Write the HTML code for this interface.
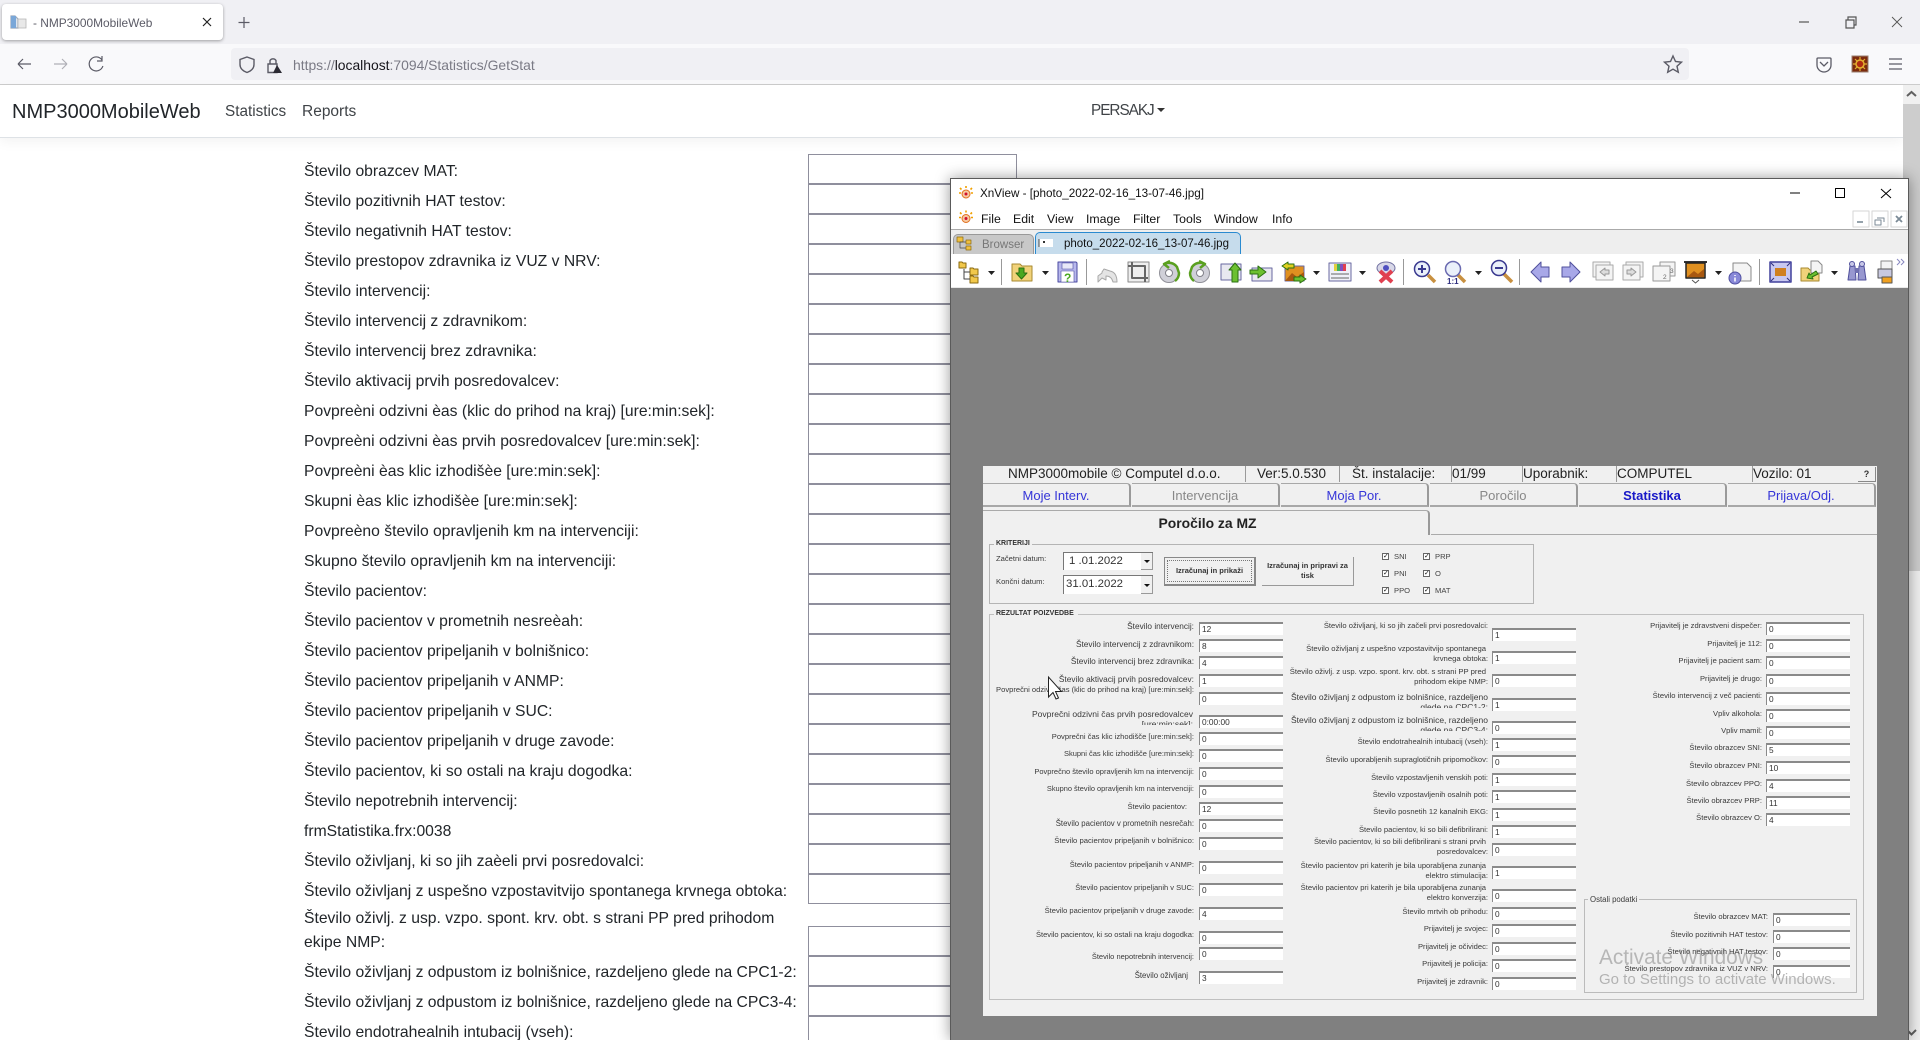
<!DOCTYPE html>
<html lang="sl"><head><meta charset="utf-8"><title>NMP3000MobileWeb</title>
<style>
html,body{margin:0;padding:0;width:1920px;height:1040px;overflow:hidden;background:#fff;font-family:"Liberation Sans",sans-serif;color:#212529}
#root{position:relative;width:1920px;height:1040px;overflow:hidden}
div,span{box-sizing:border-box}
.a{position:absolute;white-space:nowrap}
svg{position:absolute;left:0;top:0}
#list{position:absolute;left:304px;top:157px;width:500px;font-size:15.7px;color:#212529}
#list div{height:30px;line-height:30px;white-space:nowrap}
#list div.w{height:51px;line-height:24px;margin-top:0;white-space:normal}
.in{position:absolute;left:808px;width:209px;height:30px;border:1px solid #8f8f9d;background:#fff}
.m{position:absolute;top:212px;font-size:12.3px;line-height:14px;color:#111}
#form{position:absolute;left:983px;top:466px;width:894px;height:550px;background:#f0f0f0;filter:blur(.35px);overflow:visible}
.g{position:absolute;white-space:nowrap;color:#3a3a3a;font-size:8.3px;line-height:10px}
.lc{right:726px}.mc{right:432px;text-align:right}.rc{right:158px}.oc{right:152px}
.f{position:absolute;height:13px;background:#fff;border-top:2px solid #8a8a8a;border-left:1px solid #8a8a8a;font-size:8.3px;line-height:11px;padding-left:2px;color:#333;white-space:nowrap}
.fl{left:1199px;width:84px}.fm{left:1492px;width:84px}.fr{left:1766px;width:84px}.fo{left:1773px;width:77px}
.ht{position:absolute;top:466px;font-size:13.5px;line-height:16px;color:#222;white-space:nowrap}
.hd{position:absolute;top:466px;width:1px;height:16px;background:#9a9a9a}
.tb{position:absolute;top:483px;height:24px;border-top:1px solid #a8a8a8;border-right:2px solid #9a9a9a;border-bottom:2px solid #a8a8a8;text-align:center;font-size:13px;line-height:23px;border-top-right-radius:4px;background:#f0f0f0}
.ck{position:absolute;width:7px;height:7px;background:#fff;border:1px solid #666;font-size:7px;line-height:6px;color:#111;text-align:center}
.cl{position:absolute;font-size:7.6px;line-height:10px;color:#444}
.p2{padding-right:2px}
</style></head><body><div id="root">

<!-- browser chrome -->
<div class="a" style="left:0;top:0;width:1920px;height:44px;background:#f0f0f4"></div>
<div class="a" style="left:0;top:44px;width:1920px;height:40px;background:#f9f9fb"></div>
<div class="a" style="left:0;top:84px;width:1920px;height:1px;background:#ccc"></div>
<div class="a" style="left:2px;top:4px;width:221px;height:36px;background:#fff;border-radius:4px;box-shadow:0 1px 3px rgba(0,0,0,.35)"></div>
<div class="a" style="left:33px;top:16px;font-size:11.9px;line-height:15px;color:#5b5b66">- NMP3000MobileWeb</div>
<div class="a" style="left:231px;top:48px;width:1458px;height:32px;background:#f0f0f4;border-radius:4px"></div>
<div class="a" style="left:293px;top:57px;font-size:13.9px;line-height:16px;color:#7a7a85">https://<span style="color:#15141a">localhost</span>:7094/Statistics/GetStat</div>
<svg width="1920" height="100" viewBox="0 0 1920 100" fill="none" stroke="#5b5b66" stroke-width="1.2">
<path d="M11 16h4l3 3v9H11z" fill="#dfe6f0" stroke="#9aa8bb"/><path d="M11 16h5v12h-5z" fill="#7aa7d8" stroke="none"/><path d="M18 19h8v9h-8z" fill="#e8e8e8" stroke="#b5b5b5" stroke-width=".8"/>
<path d="M203 18l8 8M211 18l-8 8" stroke="#222"/>
<path d="M244 17v11M238.500 22.500h11"/>
<path d="M18 64h13M18 64l5-5M18 64l5 5"/>
<path d="M54 64h13M67 64l-5-5M67 64l-5 5" stroke="#b0b0b7"/>
<path d="M102 60a7 7 0 1 0 .9 6M102 56v5h-5" />
<path d="M247 57l7 2.500v5c0 4-3 6.500-7 8-4-1.500-7-4-7-8v-5z" stroke-width="1.4"/>
<path d="M268 64h9v8.500h-9zM270 64v-3.500a3.500 3.500 0 0 1 6 0v3" stroke-width="1.4"/><path d="M277 65l5 8h-9z" fill="#2b2a33" stroke="none"/>
<path d="M1673 56l2.500 5.500 6 .7-4.500 4 1.300 6-5.300-3-5.300 3 1.300-6-4.500-4 6-.7z" stroke-width="1.4"/>
<path d="M1818 58h12a1 1 0 0 1 1 1v6a7 7 0 0 1-14 0v-6a1 1 0 0 1 1-1zM1820 62l4 4 4-4" stroke-width="1.3"/>
<rect x="1852" y="56" width="16" height="16" fill="#7c2a0c" stroke="#9a8070" stroke-width="1"/><circle cx="1860" cy="64" r="4" fill="#b02a10" stroke="#e5b030" stroke-width="1.5"/><path d="M1860 57v3M1860 68v3M1853 64h3M1864 64h3M1855 59l2 2M1863 67l2 2M1865 59l-2 2M1857 67l-2 2" stroke="#e5b030"/>
<path d="M1889 59h13M1889 64h13M1889 69h13" stroke-width="1.3"/>
<path d="M1799 22h10" stroke="#555"/>
<path d="M1846 20h8v8h-8zM1848 20v-3h8v8h-2" stroke="#555"/>
<path d="M1892 17l10 10M1902 17l-10 10" stroke="#555" stroke-width=".9"/>
</svg>

<!-- page -->
<div class="a" style="left:0;top:85px;width:1903px;height:53px;border-bottom:1px solid #dee2e6;background:#fff;box-shadow:0 4px 12px rgba(0,0,0,.05)"></div>
<div class="a" style="left:12px;top:99px;font-size:20px;line-height:26px;color:#212529">NMP3000MobileWeb</div>
<div class="a" style="left:225px;top:102px;font-size:15.3px;line-height:20px;color:#3f4347">Statistics</div>
<div class="a" style="left:302px;top:102px;font-size:15.5px;line-height:20px;color:#3f4347">Reports</div>
<div class="a" style="left:1091px;top:101px;font-size:15.3px;line-height:20px;letter-spacing:-1px;color:#3f4347">PERSAKJ</div>
<div class="a" style="left:1157px;top:108px;width:0;height:0;border-left:4px solid transparent;border-right:4px solid transparent;border-top:4.500px solid #333"></div>

<div id="list">
<div>Število obrazcev MAT:</div>
<div>Število pozitivnih HAT testov:</div>
<div>Število negativnih HAT testov:</div>
<div>Število prestopov zdravnika iz VUZ v NRV:</div>
<div>Število intervencij:</div>
<div>Število intervencij z zdravnikom:</div>
<div>Število intervencij brez zdravnika:</div>
<div>Število aktivacij prvih posredovalcev:</div>
<div>Povpreèni odzivni èas (klic do prihod na kraj) [ure:min:sek]:</div>
<div>Povpreèni odzivni èas prvih posredovalcev [ure:min:sek]:</div>
<div>Povpreèni èas klic izhodišèe [ure:min:sek]:</div>
<div>Skupni èas klic izhodišèe [ure:min:sek]:</div>
<div>Povpreèno število opravljenih km na intervenciji:</div>
<div>Skupno število opravljenih km na intervenciji:</div>
<div>Število pacientov:</div>
<div>Število pacientov v prometnih nesreèah:</div>
<div>Število pacientov pripeljanih v bolnišnico:</div>
<div>Število pacientov pripeljanih v ANMP:</div>
<div>Število pacientov pripeljanih v SUC:</div>
<div>Število pacientov pripeljanih v druge zavode:</div>
<div>Število pacientov, ki so ostali na kraju dogodka:</div>
<div>Število nepotrebnih intervencij:</div>
<div>frmStatistika.frx:0038</div>
<div>Število oživljanj, ki so jih zaèeli prvi posredovalci:</div>
<div>Število oživljanj z uspešno vzpostavitvijo spontanega krvnega obtoka:</div>
<div class="w">Število oživlj. z usp. vzpo. spont. krv. obt. s strani PP pred prihodom ekipe NMP:</div>
<div>Število oživljanj z odpustom iz bolnišnice, razdeljeno glede na CPC1-2:</div>
<div>Število oživljanj z odpustom iz bolnišnice, razdeljeno glede na CPC3-4:</div>
<div>Število endotrahealnih intubacij (vseh):</div>
</div>

<div class="in" style="top:154px"></div><div class="in" style="top:184px"></div><div class="in" style="top:214px"></div><div class="in" style="top:244px"></div><div class="in" style="top:274px"></div><div class="in" style="top:304px"></div><div class="in" style="top:334px"></div><div class="in" style="top:364px"></div><div class="in" style="top:394px"></div><div class="in" style="top:424px"></div><div class="in" style="top:454px"></div><div class="in" style="top:484px"></div><div class="in" style="top:514px"></div><div class="in" style="top:544px"></div><div class="in" style="top:574px"></div><div class="in" style="top:604px"></div><div class="in" style="top:634px"></div><div class="in" style="top:664px"></div><div class="in" style="top:694px"></div><div class="in" style="top:724px"></div><div class="in" style="top:754px"></div><div class="in" style="top:784px"></div><div class="in" style="top:814px"></div><div class="in" style="top:844px"></div><div class="in" style="top:874px"></div><div class="in" style="top:926px"></div><div class="in" style="top:956px"></div><div class="in" style="top:986px"></div><div class="in" style="top:1016px;height:24px;border-bottom:0"></div>

<!-- scrollbar -->
<div class="a" style="left:1903px;top:85px;width:17px;height:19px;background:#f0f0f0"></div>
<div class="a" style="left:1903px;top:104px;width:17px;height:467px;background:#cdcdcd"></div>
<div class="a" style="left:1903px;top:571px;width:17px;height:469px;background:#f0f0f0"></div>
<svg width="1920" height="1040" viewBox="0 0 1920 1040" fill="none" stroke="#606060" stroke-width="2"><path d="M1907 96l4.500-4 4.500 4"/><path d="M1908 1031l3.500 3.500 4.500-4.500"/></svg>

<!-- XnView window -->
<div class="a" style="left:950px;top:178px;width:959px;height:862px;background:#fff;border:1px solid #5a5a5a;border-bottom:0;box-shadow:0 0 14px rgba(0,0,0,.4)"></div>
<div class="a" style="left:951px;top:288px;width:957px;height:752px;background:#808080"></div>
<div class="a" style="left:980px;top:187px;font-size:11.7px;line-height:14px;color:#111">XnView - [photo_2022-02-16_13-07-46.jpg]</div>
<div class="m" style="left:981px">File</div><div class="m" style="left:1013px">Edit</div><div class="m" style="left:1047px">View</div><div class="m" style="left:1086px">Image</div><div class="m" style="left:1133px">Filter</div><div class="m" style="left:1173px">Tools</div><div class="m" style="left:1214px">Window</div><div class="m" style="left:1272px">Info</div>
<div class="a" style="left:951px;top:229px;width:957px;height:25px;background:#eee;border-top:1px solid #aaa"></div>
<div class="a" style="left:953px;top:234px;width:81px;height:20px;background:#c8c8c8;border:1px solid #999;border-bottom:0;border-radius:5px 5px 0 0"></div>
<div class="a" style="left:982px;top:238px;font-size:11.5px;line-height:14px;color:#777">Browser</div>
<div class="a" style="left:1035px;top:232px;width:206px;height:22px;background:#c6dcec;border:1px solid #2a8ad0;border-bottom:0;border-radius:5px 5px 0 0"></div>
<div class="a" style="left:1064px;top:237px;font-size:11.5px;line-height:14px;color:#111">photo_2022-02-16_13-07-46.jpg</div>
<div class="a" style="left:951px;top:254px;width:957px;height:34px;background:#fff;border-bottom:1px solid #e8e8e8"></div>

<svg width="1920" height="300" viewBox="0 0 1920 300" stroke-linejoin="round">
<!-- title logos -->
<g><circle cx="966" cy="194" r="4" fill="#f7c9a0" stroke="#e07020"/><circle cx="966" cy="194" r="1.500" fill="#d01030"/><path d="M960 188l1.500 1.500M966 186v2M972 188l-1.500 1.500M959 193h2M971 193h2" stroke="#f0a000" stroke-width="1.600" fill="none"/></g>
<g transform="translate(0,24.500)"><circle cx="966" cy="194" r="4" fill="#f7c9a0" stroke="#e07020"/><circle cx="966" cy="194" r="1.500" fill="#d01030"/><path d="M960 188l1.500 1.500M966 186v2M972 188l-1.500 1.500M959 193h2M971 193h2" stroke="#f0a000" stroke-width="1.600" fill="none"/></g>
<!-- window controls -->
<path d="M1790 193h10" stroke="#000" stroke-width="1"/><rect x="1835.500" y="188.500" width="9" height="9" fill="none" stroke="#000"/><path d="M1881 189l10 9M1891 189l-10 9" stroke="#000" fill="none"/>
<g fill="none" stroke="#d6d6d6"><rect x="1853" y="211" width="16" height="16"/><rect x="1872" y="211" width="16" height="16"/><rect x="1891" y="211" width="16" height="16"/></g>
<path d="M1857 222h6" stroke="#7b8a96" stroke-width="1.600"/><path d="M1877 218h7v4M1875 220h6v5h-6z" stroke="#7b8a96" fill="none"/><path d="M1896 216l6 6M1902 216l-6 6" stroke="#7b8a96" stroke-width="1.800"/>
<!-- tab icons -->
<g fill="#f0c040" stroke="#8a6a10" stroke-width=".7"><rect x="957" y="237" width="6" height="5"/><rect x="966" y="240" width="5" height="4"/><rect x="966" y="246" width="5" height="4"/></g>
<path d="M960 242v6h6M960 242h6" stroke="#444" fill="none" stroke-width=".7"/>
<rect x="1039" y="239" width="14" height="8" fill="#fff"/><path d="M1039 239v8" stroke="#444"/><rect x="1043" y="241" width="2" height="2" fill="#333"/>
<!-- separators -->
<g stroke="#999"><path d="M1001.500 259v26M1086.500 259v26M1403.500 259v26M1519.500 259v26M1759.500 259v26"/></g>
<!-- dropdown arrows -->
<g fill="#222"><path d="M988 271h7l-3.500 4zM1042 271h7l-3.500 4zM1313 271h7l-3.500 4zM1359 271h7l-3.500 4zM1475 271h7l-3.500 4zM1715 271h7l-3.500 4zM1831 271h7l-3.500 4z"/></g>
<!-- tree -->
<g fill="#f2c84a" stroke="#8a6a10"><path d="M959 262h3l1 1h3v5h-7z"/><path d="M970 268h3l1 1h4v6h-8z"/><path d="M970 276h3l1 1h4v6h-8z"/></g><path d="M964 269v10h6M964 272h6" stroke="#444" fill="none"/>
<!-- open folder -->
<path d="M1012 264h8l2 2h10v15h-20z" fill="#f1d27a" stroke="#a88a30"/><path d="M1019 268h5v5h3l-5.500 6-5.500-6h3z" fill="#4aa820" stroke="#2a7010"/>
<!-- save -->
<path d="M1058 262h18l1 1v19h-19z" fill="#b8b8ec" stroke="#4848a0"/><rect x="1062" y="263" width="11" height="6" fill="#e8e8f8" stroke="#4848a0" stroke-width=".6"/><rect x="1061" y="271" width="13" height="11" fill="#fff" stroke="#4848a0" stroke-width=".6"/><text x="1064" y="282" font-family="Liberation Sans" font-weight="bold" font-size="12" fill="#4aa820">?</text>
<!-- undo -->
<path d="M1098 282v-6l4-3v-1l2-3 6 2c5 1 7 5 7 11h-4c-1-4-3-6-7-6v4l-4-2z" fill="#e4e4e4" stroke="#a8a8a8"/>
<!-- crop -->
<rect x="1128" y="262" width="21" height="20" fill="#eee" stroke="#888"/><path d="M1132 262v16h16M1128 266h17v16" fill="none" stroke="#666" stroke-width="2"/>
<!-- rotate -->
<circle cx="1169" cy="273" r="9.500" fill="#d0d0d8" stroke="#909098"/><circle cx="1169" cy="273" r="3.500" fill="#fff" stroke="#808088"/><path d="M1164 264a10 10 0 0 1 13 3l2 6a10 10 0 0 1-4 8M1170 261l-6 3 5 4" fill="none" stroke="#5aa020" stroke-width="2.500"/>
<circle cx="1200" cy="273" r="9.500" fill="#d0d0d8" stroke="#909098"/><circle cx="1200" cy="273" r="3.500" fill="#fff" stroke="#808088"/><path d="M1205 264a10 10 0 0 0-13 3l-2 6a10 10 0 0 0 4 8M1199 261l6 3-5 4" fill="none" stroke="#5aa020" stroke-width="2.500"/>
<!-- up / forward -->
<rect x="1221" y="264" width="20" height="16" fill="#e8e8f0" stroke="#6868a0"/><path d="M1235 263l6 7h-3v12h-6v-12h-3z" fill="#6cc030" stroke="#2a7010"/>
<rect x="1252" y="268" width="20" height="13" fill="#e8e8f0" stroke="#6868a0"/><path d="M1250 274v-4h8v-4l8 6-8 6v-4z" fill="#6cc030" stroke="#2a7010"/>
<!-- swap image -->
<rect x="1285" y="266" width="19" height="15" fill="#e09020" stroke="#6868a0"/><path d="M1285 281l7-8 5 4 7-5v9z" fill="#a85810"/><path d="M1282 266l6-4v2h6v4h-6v2z" fill="#e0d020" stroke="#2a7010"/><path d="M1306 279l-6 4v-2h-6v-4h6v-2z" fill="#6cc030" stroke="#2a7010"/>
<!-- colors -->
<rect x="1329" y="263" width="22" height="18" fill="#f0f0f8" stroke="#6868a0"/><rect x="1334" y="264" width="3" height="7" fill="#e0d040"/><rect x="1337" y="264" width="3" height="7" fill="#40b060"/><rect x="1340" y="264" width="3" height="7" fill="#8050c0"/><rect x="1343" y="264" width="3" height="7" fill="#e04050"/><path d="M1331 274h18M1331 278h18" stroke="#666"/>
<!-- eye -->
<ellipse cx="1386" cy="268" rx="9" ry="6" fill="#d8d8e8" stroke="#7070a0"/><circle cx="1386" cy="268" r="3" fill="#5050c0"/><path d="M1380 271l12 11M1392 271l-12 11" stroke="#e04050" stroke-width="4"/>
<!-- zoom -->
<path d="M1428 275l7 7" stroke="#c89040" stroke-width="3.500"/><circle cx="1422" cy="269" r="7.500" fill="#eaf0fa" stroke="#3a3a90" stroke-width="1.500"/><path d="M1418 269h8M1422 265v8" stroke="#3a3a90" stroke-width="2"/>
<path d="M1458 275l7 7" stroke="#c89040" stroke-width="3.500"/><circle cx="1453" cy="269" r="7.500" fill="#eaf0fa" stroke="#6a6ab0" stroke-width="1.500"/><text x="1447" y="284" font-family="Liberation Sans" font-weight="bold" font-size="8" fill="#303080">1:1</text>
<path d="M1504 274l8 8" stroke="#c89040" stroke-width="3.500"/><circle cx="1499" cy="268" r="7.500" fill="#eaf0fa" stroke="#3a3a90" stroke-width="1.500"/><path d="M1495 268h8" stroke="#3a3a90" stroke-width="2"/>
<!-- arrows -->
<path d="M1531 272l10-10v5h8v10h-8v5z" fill="#a8a8e8" stroke="#50509c"/>
<path d="M1580 272l-10-10v5h-8v10h8v5z" fill="#a8a8e8" stroke="#50509c"/>
<!-- page stacks -->
<g fill="#f4f4f4" stroke="#aaa"><rect x="1593" y="262" width="17" height="15"/><rect x="1596" y="265" width="17" height="15"/></g><path d="M1600 272l5-4v2h4v4h-4v2z" fill="#ddd" stroke="#999"/>
<g fill="#f4f4f4" stroke="#aaa"><rect x="1626" y="262" width="17" height="15"/><rect x="1623" y="265" width="17" height="15"/></g><path d="M1636 272l-5-4v2h-4v4h4v2z" fill="#ddd" stroke="#999"/>
<g fill="#f4f4f4" stroke="#999"><rect x="1660" y="262" width="15" height="14"/><rect x="1653" y="266" width="17" height="15"/></g><text x="1670" y="273" font-family="Liberation Sans" font-size="6.500" fill="#666">3</text><text x="1663" y="279" font-family="Liberation Sans" font-size="6.500" fill="#666">2</text>
<!-- slideshow -->
<path d="M1684 262h23" stroke="#333" stroke-width="2"/><rect x="1686" y="263" width="19" height="15" fill="#e09020" stroke="#222" stroke-width="1.500"/><path d="M1687 277l7-6 4 3 6-5v8z" fill="#a85810"/><path d="M1692 280l3.500 3 3.500-3" fill="none" stroke="#555"/>
<!-- info -->
<path d="M1733 263h14l4 4v14h-18z" fill="#f4f4f4" stroke="#888"/><circle cx="1735" cy="278" r="6" fill="#8888d8" stroke="#5050a0"/><path d="M1735 275v1M1735 277.500v4" stroke="#fff" stroke-width="1.500"/>
<!-- fullscreen -->
<rect x="1770" y="262" width="21" height="20" fill="#c8c8f0" stroke="#40409c" stroke-width="1.500"/><rect x="1775" y="268" width="11" height="8" fill="#d08020"/><path d="M1771 263l3 3M1790 263l-3 3M1771 281l3-3M1790 281l-3-3" stroke="#303080"/>
<!-- export -->
<path d="M1801 268h7l2 2h9v11h-18z" fill="#f1d27a" stroke="#a88a30"/><path d="M1811 261h7l4 4v8h-11z" fill="#f4f4f4" stroke="#888"/><path d="M1807 278l2-5 1 2 6-4 2 3-6 3 1 2z" fill="#6cc030" stroke="#2a7010"/>
<!-- binoculars -->
<path d="M1848 280l2-14h5l1 14zM1858 280l1-14h5l2 14z" fill="#9898d0" stroke="#50509c"/><rect x="1855" y="268" width="4" height="5" fill="#7070b0"/><circle cx="1852" cy="264" r="2.500" fill="#c8c8e8" stroke="#50509c"/><circle cx="1862" cy="264" r="2.500" fill="#c8c8e8" stroke="#50509c"/>
<!-- print -->
<rect x="1881" y="261" width="11" height="8" fill="#f4f4f4" stroke="#888"/><rect x="1878" y="269" width="14" height="9" fill="#c8c8e0" stroke="#555"/><rect x="1882" y="277" width="10" height="6" fill="#f0a020" stroke="#555"/>
<path d="M1897 259l3 3-3 3M1901 259l3 3-3 3" fill="none" stroke="#8888c0"/>
</svg>

<!-- photographed form -->
<div id="form"></div>
<div style="position:absolute;left:0;top:0;width:1920px;height:1040px;filter:blur(.35px)">
<div class="ht" style="left:1008px">NMP3000mobile © Computel d.o.o.</div>
<div class="ht" style="left:1257px">Ver:5.0.530</div>
<div class="ht" style="left:1352px">Št. instalacije:</div>
<div class="ht" style="left:1452px">01/99</div>
<div class="ht" style="left:1523px">Uporabnik:</div>
<div class="ht" style="left:1617px">COMPUTEL</div>
<div class="ht" style="left:1753px">Vozilo: 01</div>
<div class="hd" style="left:1245px"></div><div class="hd" style="left:1339px"></div><div class="hd" style="left:1451px"></div><div class="hd" style="left:1522px"></div><div class="hd" style="left:1616px"></div><div class="hd" style="left:1752px"></div>
<div class="a" style="left:1858px;top:467px;width:18px;height:15px;background:#f0f0f0;border-right:1px solid #888;border-bottom:1px solid #888;font:bold 9px/14px 'Liberation Sans';text-align:center;color:#333">?</div>

<div class="tb" style="left:983px;width:148px;color:#3535d8">Moje Interv.</div>
<div class="tb" style="left:1132px;width:148px;color:#888">Intervencija</div>
<div class="tb" style="left:1281px;width:148px;color:#3535d8">Moja Por.</div>
<div class="tb" style="left:1430px;width:148px;color:#888">Poročilo</div>
<div class="tb" style="left:1579px;width:148px;color:#1818c8;font-weight:bold">Statistika</div>
<div class="tb" style="left:1728px;width:148px;color:#3535d8">Prijava/Odj.</div>

<div class="a" style="left:983px;top:510px;width:447px;height:25px;border-top:1px solid #aaa;border-right:2px solid #999;border-top-right-radius:4px"></div>
<div class="a" style="left:1431px;top:534px;width:446px;height:1px;background:#aaa"></div>
<div class="a" style="left:983px;top:515px;width:449px;text-align:center;font:bold 13.9px/16px 'Liberation Sans';color:#222">Poročilo za MZ</div>

<!-- kriteriji -->
<div class="a" style="left:989px;top:544px;width:545px;height:60px;border:1px solid #b4b4b4"></div>
<div class="g" style="left:994px;top:539px;background:#f0f0f0;padding:0 2px;font-weight:bold;font-size:7px;color:#333">KRITERIJI</div>
<div class="g" style="left:996px;top:554px;font-size:7.6px">Začetni datum:</div>
<div class="g" style="left:996px;top:577px;font-size:7.6px">Končni datum:</div>
<div class="a" style="left:1063px;top:552px;width:90px;height:18px;background:#fff;border-top:1px solid #777;border-left:1px solid #777;font-size:11.4px;line-height:16px;padding-left:5px;color:#333">1 .01.2022</div>
<div class="a" style="left:1063px;top:575px;width:90px;height:19px;background:#fff;border-top:1px solid #777;border-left:1px solid #777;font-size:11.4px;line-height:16px;padding-left:2px;color:#333">31.01.2022</div>
<div class="a" style="left:1141px;top:553px;width:12px;height:17px;background:#f0f0f0;border-bottom:1px solid #999;border-right:1px solid #999"></div>
<div class="a" style="left:1141px;top:576px;width:12px;height:18px;background:#f0f0f0;border-bottom:1px solid #999;border-right:1px solid #999"></div>
<div class="a" style="left:1144px;top:560px;border-left:3px solid transparent;border-right:3px solid transparent;border-top:3px solid #111"></div>
<div class="a" style="left:1144px;top:584px;border-left:3px solid transparent;border-right:3px solid transparent;border-top:3px solid #111"></div>
<div class="a" style="left:1164px;top:557px;width:92px;height:29px;border:1px solid #888;border-right-width:2px;border-bottom-width:2px;background:#f0f0f0"><div style="margin:2px;height:22px;border:1px dotted #777;text-align:center;font:bold 7.5px/19px 'Liberation Sans';color:#333">Izračunaj in prikaži</div></div>
<div class="a" style="left:1262px;top:557px;width:92px;height:29px;border-right:1px solid #999;border-bottom:1px solid #999;background:#f0f0f0;white-space:normal;text-align:center;font:bold 7.5px/10px 'Liberation Sans';color:#333;padding-top:4px">Izračunaj in pripravi za tisk</div>
<div class="ck" style="left:1382px;top:553px">✓</div><div class="cl" style="left:1394px;top:552px">SNI</div>
<div class="ck" style="left:1423px;top:553px">✓</div><div class="cl" style="left:1435px;top:552px">PRP</div>
<div class="ck" style="left:1382px;top:570px">✓</div><div class="cl" style="left:1394px;top:569px">PNI</div>
<div class="ck" style="left:1423px;top:570px">✓</div><div class="cl" style="left:1435px;top:569px">O</div>
<div class="ck" style="left:1382px;top:587px">✓</div><div class="cl" style="left:1394px;top:586px">PPO</div>
<div class="ck" style="left:1423px;top:587px">✓</div><div class="cl" style="left:1435px;top:586px">MAT</div>

<!-- rezultat -->
<div class="a" style="left:989px;top:614px;width:875px;height:386px;border:1px solid #c0c0c0"></div>
<div class="g" style="left:994px;top:609px;background:#f0f0f0;padding:0 4px 0 2px;font-weight:bold;font-size:7px;color:#333">REZULTAT POIZVEDBE</div>
<div class="a" style="left:1584px;top:899px;width:273px;height:94px;border:1px solid #bbb"></div>
<div class="g" style="left:1588px;top:895px;background:#f0f0f0;padding:0 2px;font-size:7.8px">Ostali podatki</div>

<!-- left column -->
<div class="g lc" style="top:621px">Število intervencij:</div><div class="f fl" style="top:622px">12</div>
<div class="g lc" style="top:639px">Število intervencij z zdravnikom:</div><div class="f fl" style="top:639px">8</div>
<div class="g lc" style="top:656px">Število intervencij brez zdravnika:</div><div class="f fl" style="top:656px">4</div>
<div class="g lc" style="top:674px">Število aktivacij prvih posredovalcev:</div><div class="f fl" style="top:674px">1</div>
<div class="g lc" style="top:685px;font-size:7.6px">Povprečni odzivni čas (klic do prihod na kraj) [ure:min:sek]:</div><div class="f fl" style="top:692px">0</div>
<div class="g" style="right:727px;top:709px;height:16px;overflow:hidden;text-align:right;line-height:10px;font-size:8.55px">Povprečni odzivni čas prvih posredovalcev<br>[ure:min:sek]:</div><div class="f fl" style="top:715px">0:00:00</div>
<div class="g lc" style="top:732px;font-size:7.6px">Povprečni čas klic izhodišče [ure:min:sek]:</div><div class="f fl" style="top:732px">0</div>
<div class="g lc" style="top:749px;font-size:7.5px">Skupni čas klic izhodišče [ure:min:sek]:</div><div class="f fl" style="top:749px">0</div>
<div class="g lc" style="top:767px;font-size:7.5px">Povprečno število opravljenih km na intervenciji:</div><div class="f fl" style="top:767px">0</div>
<div class="g lc" style="top:784px;font-size:7.4px">Skupno število opravljenih km na intervenciji:</div><div class="f fl" style="top:785px">0</div>
<div class="g" style="right:733px;top:802px;font-size:7.6px">Število pacientov:</div><div class="f fl" style="top:802px">12</div>
<div class="g lc" style="top:819px;font-size:7.8px">Število pacientov v prometnih nesrečah:</div><div class="f fl" style="top:819px">0</div>
<div class="g lc" style="top:836px;font-size:7.7px">Število pacientov pripeljanih v bolnišnico:</div><div class="f fl" style="top:837px">0</div>
<div class="g lc" style="top:860px;font-size:7.5px">Število pacientov pripeljanih v ANMP:</div><div class="f fl" style="top:861px">0</div>
<div class="g lc" style="top:883px;font-size:7.5px">Število pacientov pripeljanih v SUC:</div><div class="f fl" style="top:883px">0</div>
<div class="g lc" style="top:906px;font-size:7.55px">Število pacientov pripeljanih v druge zavode:</div><div class="f fl" style="top:907px">4</div>
<div class="g lc" style="top:930px;font-size:7.55px">Število pacientov, ki so ostali na kraju dogodka:</div><div class="f fl" style="top:931px">0</div>
<div class="g lc" style="top:952px;font-size:7.5px">Število nepotrebnih intervencij:</div><div class="f fl" style="top:947px">0</div>
<div class="g" style="right:732px;top:971px;font-size:7.8px">Število oživljanj</div><div class="f fl" style="top:971px">3</div>

<!-- middle column -->
<div class="g mc" style="top:621px;font-size:7.6px">Število oživljanj, ki so jih začeli prvi posredovalci:</div><div class="f fm" style="top:628px">1</div>
<div class="g mc" style="top:644px;font-size:7.7px"><span class="p2">Število oživljanj z uspešno vzpostavitvijo spontanega</span><br>krvnega obtoka:</div><div class="f fm" style="top:651px">1</div>
<div class="g mc" style="top:667px;font-size:7.7px"><span class="p2">Število oživlj. z usp. vzpo. spont. krv. obt. s strani PP pred</span><br>prihodom ekipe NMP:</div><div class="f fm" style="top:674px">0</div>
<div class="g mc" style="top:692px;height:16px;overflow:hidden;font-size:8.5px">Število oživljanj z odpustom iz bolnišnice, razdeljeno<br>glede na CPC1-2:</div><div class="f fm" style="top:698px">1</div>
<div class="g mc" style="top:715px;height:16px;overflow:hidden;font-size:8.5px">Število oživljanj z odpustom iz bolnišnice, razdeljeno<br>glede na CPC3-4:</div><div class="f fm" style="top:721px">0</div>
<div class="g mc" style="top:737px;font-size:7.6px">Število endotrahealnih intubacij (vseh):</div><div class="f fm" style="top:738px">1</div>
<div class="g mc" style="top:755px;font-size:7.6px">Število uporabljenih supraglotičnih pripomočkov:</div><div class="f fm" style="top:755px">0</div>
<div class="g mc" style="top:773px;font-size:7.6px">Število vzpostavljenih venskih poti:</div><div class="f fm" style="top:773px">1</div>
<div class="g mc" style="top:790px;font-size:7.6px">Število vzpostavljenih osalnih poti:</div><div class="f fm" style="top:790px">1</div>
<div class="g mc" style="top:807px;font-size:7.6px">Število posnetih 12 kanalnih EKG:</div><div class="f fm" style="top:808px">1</div>
<div class="g mc" style="top:825px;font-size:7.6px">Število pacientov, ki so bili defibrilirani:</div><div class="f fm" style="top:825px">1</div>
<div class="g mc" style="top:837px;font-size:7.6px"><span class="p2">Število pacientov, ki so bili defibrilirani s strani prvih</span><br>posredovalcev:</div><div class="f fm" style="top:843px">0</div>
<div class="g mc" style="top:861px;font-size:7.6px"><span class="p2">Število pacientov pri katerih je bila uporabljena zunanja</span><br>elektro stimulacija:</div><div class="f fm" style="top:866px">1</div>
<div class="g mc" style="top:883px;font-size:7.6px"><span class="p2">Število pacientov pri katerih je bila uporabljena zunanja</span><br>elektro konverzija:</div><div class="f fm" style="top:889px">0</div>
<div class="g mc" style="top:907px;font-size:7.6px">Število mrtvih ob prihodu:</div><div class="f fm" style="top:907px">0</div>
<div class="g mc" style="top:924px;font-size:7.6px">Prijavitelj je svojec:</div><div class="f fm" style="top:924px">0</div>
<div class="g mc" style="top:942px;font-size:7.6px">Prijavitelj je očividec:</div><div class="f fm" style="top:942px">0</div>
<div class="g mc" style="top:959px;font-size:7.6px">Prijavitelj je policija:</div><div class="f fm" style="top:959px">0</div>
<div class="g mc" style="top:977px;font-size:7.6px">Prijavitelj je zdravnik:</div><div class="f fm" style="top:977px">0</div>

<!-- right column -->
<div class="g rc" style="top:621px;font-size:7.6px">Prijavitelj je zdravstveni dispečer:</div><div class="f fr" style="top:622px">0</div>
<div class="g rc" style="top:639px;font-size:7.6px">Prijavitelj je 112:</div><div class="f fr" style="top:639px">0</div>
<div class="g rc" style="top:656px;font-size:7.6px">Prijavitelj je pacient sam:</div><div class="f fr" style="top:656px">0</div>
<div class="g rc" style="top:674px;font-size:7.6px">Prijavitelj je drugo:</div><div class="f fr" style="top:674px">0</div>
<div class="g rc" style="top:691px;font-size:7.6px">Število intervencij z več pacienti:</div><div class="f fr" style="top:692px">0</div>
<div class="g rc" style="top:709px;font-size:7.6px">Vpliv alkohola:</div><div class="f fr" style="top:709px">0</div>
<div class="g rc" style="top:726px;font-size:7.6px">Vpliv mamil:</div><div class="f fr" style="top:726px">0</div>
<div class="g rc" style="top:743px;font-size:7.6px">Število obrazcev SNI:</div><div class="f fr" style="top:743px">5</div>
<div class="g rc" style="top:761px;font-size:7.6px">Število obrazcev PNI:</div><div class="f fr" style="top:761px">10</div>
<div class="g rc" style="top:779px;font-size:7.6px">Število obrazcev PPO:</div><div class="f fr" style="top:779px">4</div>
<div class="g rc" style="top:796px;font-size:7.6px">Število obrazcev PRP:</div><div class="f fr" style="top:796px">11</div>
<div class="g rc" style="top:813px;font-size:7.6px">Število obrazcev O:</div><div class="f fr" style="top:813px">4</div>

<!-- ostali -->
<div class="g oc" style="top:912px;font-size:7.6px">Število obrazcev MAT:</div><div class="f fo" style="top:913px">0</div>
<div class="g oc" style="top:930px;font-size:7.6px">Število pozitivnih HAT testov:</div><div class="f fo" style="top:930px">0</div>
<div class="g oc" style="top:947px;font-size:7.6px">Število negativnih HAT testov:</div><div class="f fo" style="top:947px">0</div>
<div class="g oc" style="top:964px;font-size:7.6px">Število prestopov zdravnika iz VUZ v NRV:</div><div class="f fo" style="top:965px">0</div>
</div>

<!-- cursor -->
<svg width="1920" height="1040" viewBox="0 0 1920 1040"><path d="M1048.500 677v20l4.500-4.500 3 6.500 2.500-1-3-6.500h6z" fill="#fff" stroke="#222" stroke-width="1"/></svg>

<!-- activation watermark -->
<div class="a" style="left:1599px;top:946px;font-size:20.8px;line-height:24px;color:rgba(120,120,120,.48)">Activate Windows</div>
<div class="a" style="left:1599px;top:971px;font-size:15px;line-height:18px;color:rgba(120,120,120,.52)">Go to Settings to activate Windows.</div>
</div></body></html>
